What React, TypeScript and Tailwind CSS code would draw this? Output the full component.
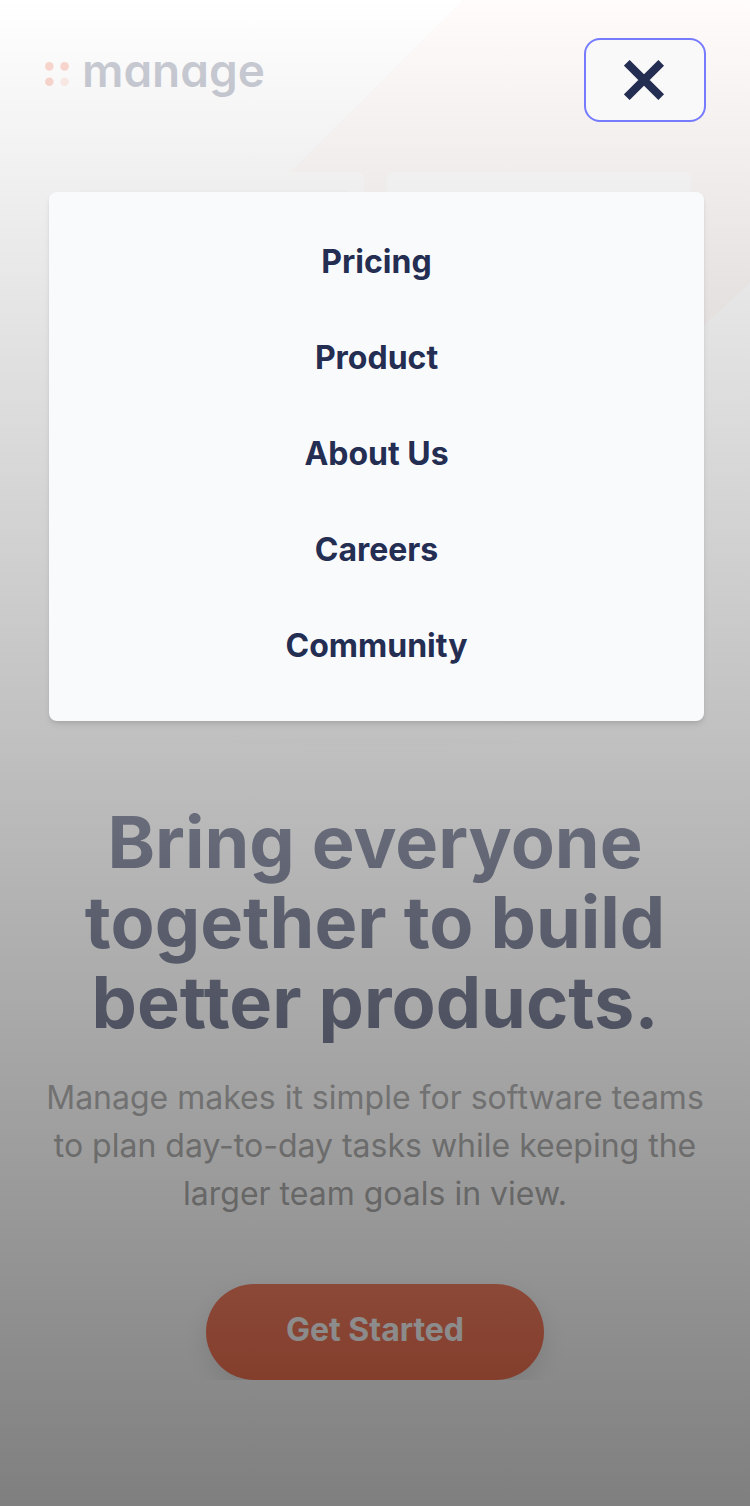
import { useState } from "react";

const links = ["Pricing", "Product", "About Us", "Careers", "Community"];

function Pattern() {
  return (
    <svg
      aria-hidden="true"
      className="absolute right-0 top-0"
      width="560"
      height="620"
      viewBox="190 0 560 620"
      fill="none"
    >
      <path
        d="M463 0H750V283L704 325L500 532Q470 562 440 532L212 304Q182 274 212 250Z"
        fill="#fff0eb"
      />
    </svg>
  );
}

function Illustration() {
  return (
    <svg
      aria-hidden="true"
      className="relative block w-full"
      viewBox="0 0 660 580"
      fill="none"
    >
      <rect x="0" y="0" width="319" height="250" rx="6" fill="#fff" />
      <rect x="35" y="18" width="269" height="2" fill="#f4f4f4" />
      <rect x="342" y="0" width="303" height="300" rx="6" fill="#fff" />
      <rect x="0" y="280" width="319" height="230" rx="6" fill="#fff" />
      <rect x="342" y="325" width="303" height="185" rx="6" fill="#fff" />
      <ellipse cx="331" cy="568" rx="150" ry="4" fill="#fcfcfc" />
    </svg>
  );
}

function Logo() {
  return (
    <a href="#" className="flex items-start gap-3 text-[#242d52]">
      <svg aria-hidden="true" className="mt-4" width="26" height="26" viewBox="0 0 26 26">
        <circle cx="5.3" cy="4.4" r="4.3" fill="#f25f3a" />
        <circle cx="20.6" cy="4.4" r="4.3" fill="#f25f3a" />
        <circle cx="5.3" cy="19.8" r="4.3" fill="#f25f3a" />
        <circle cx="20.6" cy="19.8" r="4.3" fill="#f9b8a5" />
      </svg>
      <span className="text-[46px] leading-12 font-semibold [font-feature-settings:'cv11']">
        manage
      </span>
    </a>
  );
}

export default function App() {
  const [open, setOpen] = useState(true);

  return (
    <div className="relative min-h-screen overflow-hidden bg-white font-[Inter,sans-serif]">
      <Pattern />
      <header className="flex items-start justify-between px-11 pt-[38px]">
        <div className="relative pt-2">
          <Logo />
        </div>
        <button
          type="button"
          aria-label={open ? "Close menu" : "Open menu"}
          aria-expanded={open}
          onClick={() => setOpen(!open)}
          className="relative z-20 flex h-[84px] w-[122px] items-center justify-center rounded-2xl border-2 border-[#767bff] bg-[#f9f9f9]"
        >
          <svg aria-hidden="true" width="42" height="40" viewBox="0 0 42 40">
            {open ? (
              <path d="M2.8 2.8L37.2 37.2M37.2 2.8L2.8 37.2" stroke="#242d52" strokeWidth="8" />
            ) : (
              <path d="M0 8H40M0 20H40M0 32H40" stroke="#242d52" strokeWidth="6" />
            )}
          </svg>
        </button>
      </header>

      <main className="relative overflow-hidden px-11 pt-[50px]">
        <Illustration />
        <div className="mt-12 flex flex-col items-center text-center">
          <h1 className="text-7xl leading-20 font-bold text-[#242d52]">
            Bring everyone together to build better products.
          </h1>
          <p className="mt-8 text-[32px] leading-12 text-[#8c8c8c]">
            Manage makes it simple for software teams to plan day-to-day tasks while keeping the
            larger team goals in view.
          </p>
          <a
            href="#"
            className="mt-[66px] flex h-24 items-center rounded-full bg-[#f25f3a] px-20 pb-1 text-[32px] leading-12 font-bold text-[#fafafa] shadow-[0_8px_24px_rgba(0,0,0,0.12)]"
          >
            Get Started
          </a>
        </div>
      </main>

      {open && (
        <>
          <div className="absolute inset-0 z-10 bg-[linear-gradient(to_bottom,rgba(255,255,255,0.78),rgba(0,0,0,0.5))]" />
          <nav className="absolute top-48 right-[46px] left-[49px] z-20 flex flex-col items-center gap-12 rounded-lg bg-[#f9fafc] pt-[46px] pb-[51px] text-[32px] leading-12 font-bold text-[#242d52] shadow-md">
            {links.map((label) => (
              <a key={label} href="#">
                {label}
              </a>
            ))}
          </nav>
        </>
      )}
    </div>
  );
}
